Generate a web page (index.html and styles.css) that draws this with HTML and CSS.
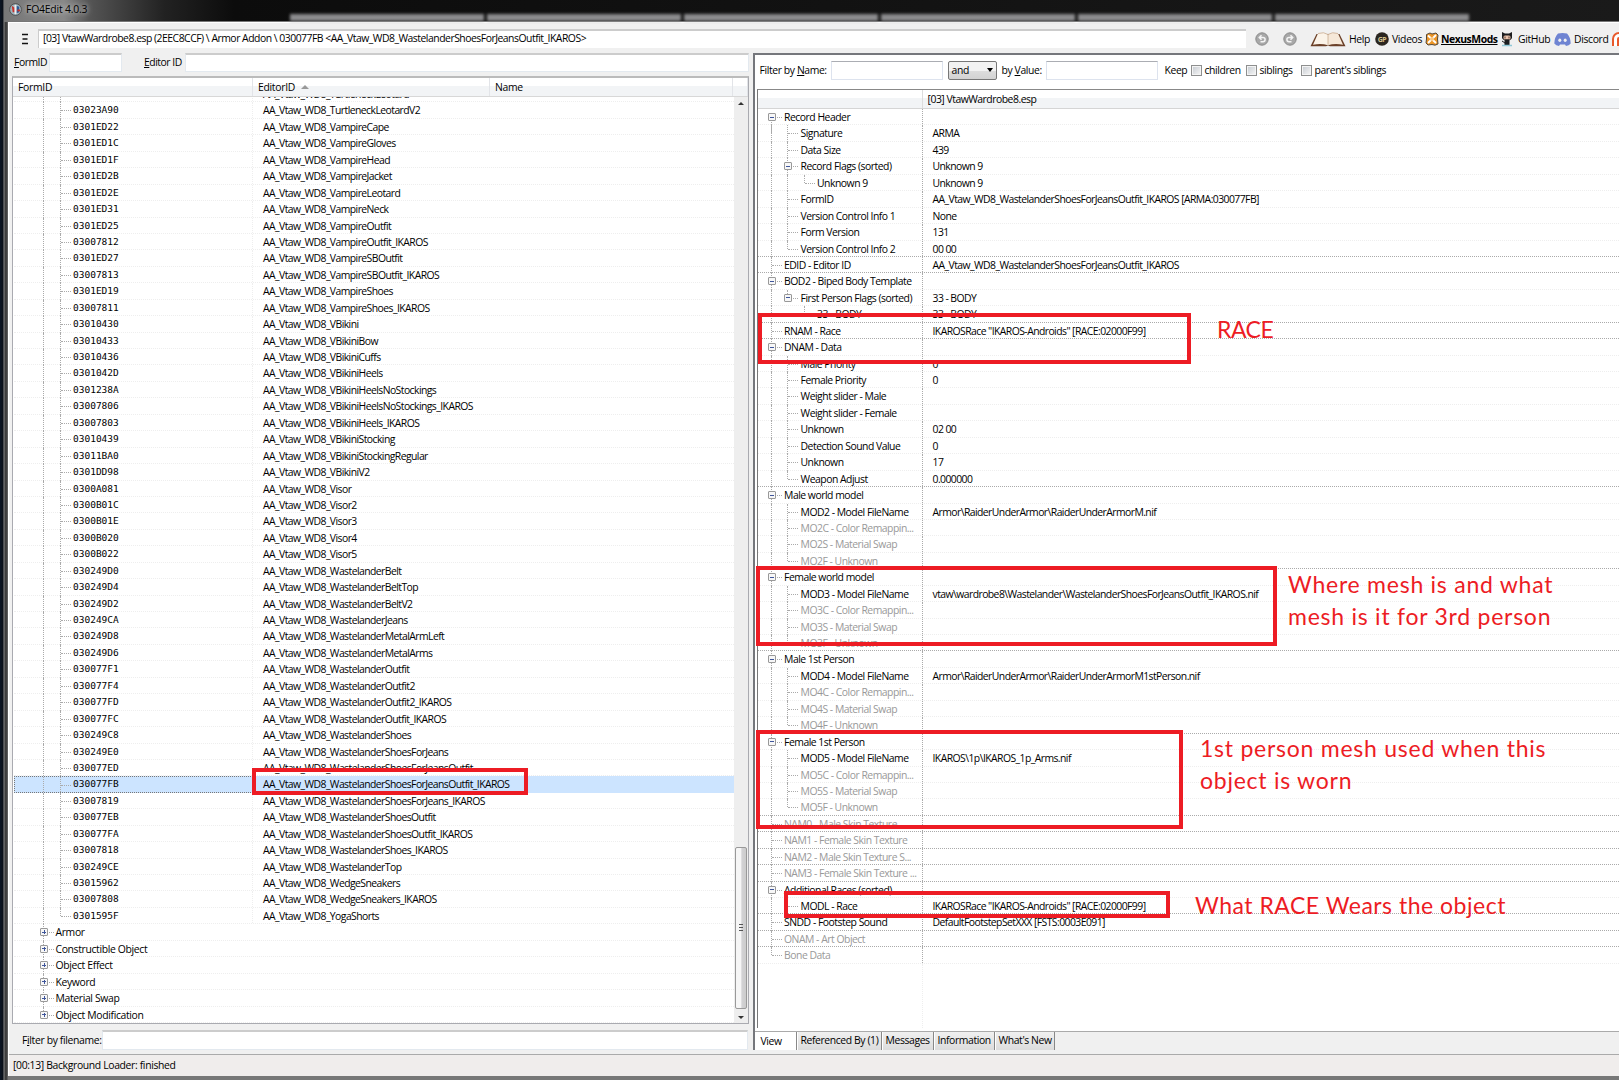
FILE: index.html
```
<!DOCTYPE html>
<html lang="en">
<head>
    <meta charset="UTF-8">
    <title>FO4Edit 4.0.3</title>
    <link rel="stylesheet" href="styles.css">
</head>
<body>
    <div class="titlebar">
        <svg class="app-icon" viewBox="0 0 14 14">
            <circle cx="7" cy="7" r="6.3" fill="#9fb4bd" stroke="#4b4b4b"/>
            <path d="M3 3l3 2v5H4z" fill="#c8322c"/>
            <path d="M8 3l3 1v6l-3 1z" fill="#2c5a96"/>
            <path d="M6 2h2v10H6z" fill="#eee"/>
            <path d="M9 7h3v2H9z" fill="#c8322c"/>
        </svg>
        <span class="app-title">FO4Edit 4.0.3</span>
        <div class="glass"><i></i><i></i><i></i><i></i><i></i><i></i></div>
    </div>

    <div class="window">
        <div class="toolbar">
            <svg class="menu-icon" viewBox="0 0 8 12"><path d="M1 1.5h6M1.5 6h5M1 10.5h6" stroke="#111" stroke-width="1.6"/></svg>
            <div class="path">[03] VtawWardrobe8.esp (2EEC8CCF) \ Armor Addon \ 030077FB &lt;AA_Vtaw_WD8_WastelanderShoesForJeansOutfit_IKAROS&gt;</div>
            <div class="links">
                <svg class="nav-icon" viewBox="0 0 14 14"><circle cx="7" cy="7" r="6.2" fill="#a8a8a8" stroke="#8b8b8b"/><path d="M4.500 5.500h3.500a2 2 0 0 1 0 4.200H5.500M6.500 3.300L4.300 5.500L6.500 7.700" fill="none" stroke="#f4f4f4" stroke-width="1.500"/></svg>
                <svg class="nav-icon next" viewBox="0 0 14 14"><circle cx="7" cy="7" r="6.2" fill="#a8a8a8" stroke="#8b8b8b"/><path d="M9.500 5.500H6a2 2 0 0 0 0 4.200h2.500M7.500 3.300L9.700 5.500L7.500 7.700" fill="none" stroke="#f4f4f4" stroke-width="1.500"/></svg>
                <svg class="book" viewBox="0 0 36 15">
                    <path d="M.5 14.300L6.500 2h23l6 12.300H20l-2-.8-2 .8z" fill="#6b4028"/>
                    <path d="M3 12.800L8 1.500Q14 -.5 18 2.500V13.300Q11 10.800 3 12.800z" fill="#fbf3e8"/>
                    <path d="M33 12.800L28 1.500Q22 -.5 18 2.500V13.300Q25 10.800 33 12.800z" fill="#f6e8d8"/>
                    <path d="M8 1.500Q14 -.5 18 2.500Q22 -.5 28 1.500" fill="none" stroke="#c9ab8f" stroke-width=".8"/>
                    <path d="M18 2.500V13" stroke="#c9ab8f" stroke-width=".8"/>
                </svg>
                <span class="w-help">Help</span>
                <svg class="ico" viewBox="0 0 14 14"><circle cx="7" cy="7" r="6.8" fill="#2b2620"/><text x="7" y="9.8" text-anchor="middle" class="gp">GP</text></svg>
                <span class="w-videos">Videos</span>
                <svg class="ico" viewBox="0 0 14 14"><path d="M1.500 2.500L5 1l2 1 4-1 2 2-.5 4 .5 5-3 1.200-3-.7-4 .5L1 11l.5-4z" fill="#ec9526" stroke="#54483a"/><path d="M3 3.500l8 7.500M11 3l-8 8" stroke="#fff" stroke-width="1.800"/><circle cx="7" cy="7" r="2" fill="#f6c684"/></svg>
                <span class="w-nexus">NexusMods</span>
                <svg class="ico cat" viewBox="0 0 14 15"><path d="M2 0l3 1.500h4L12 0v6Q11 8.500 7 8.500T2 6z" fill="#1d1d1f"/><rect x="3.500" y="3.500" width="7" height="4" rx="1.500" fill="#e9c3ac"/><path d="M5 4.500v2M9 4.500v2" stroke="#59362d"/><path d="M5 8h4v5H5zM2 9l3 2" fill="#1d1d1f" stroke="#1d1d1f"/><path d="M2 13.500h10" stroke="#8fc8d8" stroke-width="1.500"/></svg>
                <span class="w-github">GitHub</span>
                <svg class="discord" viewBox="0 0 17 13"><path d="M4 .5Q8.500 -.5 13 .5Q16.500 4 16.700 10.500Q15 12.500 12 13L11 11.500H6L5 13Q2 12.500.3 10.500Q.5 4 4 .5z" fill="#6f84d2"/><ellipse cx="5.800" cy="7.300" rx="1.500" ry="1.700" fill="#f0f0f0"/><ellipse cx="11.200" cy="7.300" rx="1.500" ry="1.700" fill="#f0f0f0"/></svg>
                <span class="w-discord">Discord</span>
                <svg class="patreon" viewBox="0 0 14 14"><path d="M1 14V7a6 6 0 0 1 12 0v7" fill="#fff" stroke="#e8592b" stroke-width="2"/><path d="M5 14V7a2 2 0 0 1 4 0v7" fill="#e8592b"/></svg>
            </div>
        </div>

        <div class="main">
            <div class="left">
                <div class="search">
                    <label><u>F</u>ormID</label>
                    <div class="input form-id"></div>
                    <label class="editor-label"><u>E</u>ditor ID</label>
                    <div class="input editor-id"></div>
                </div>
                <div class="tree">
                    <div class="tree-head">
                        <span>FormID</span><span>EditorID <i class="sort"></i></span><span>Name</span><span></span>
                    </div>
                    <div class="tree-body">
                        <div class="tree-rows" id="treeRows"></div>
                        <div class="scrollbar">
                            <i class="arrow up"></i>
                            <div class="thumb"><b></b><b></b><b></b></div>
                            <i class="arrow down"></i>
                        </div>
                    </div>
                </div>
                <div class="file-filter">
                    <label>F<u>i</u>lter by filename:</label>
                    <div class="input"></div>
                </div>
            </div>

            <div class="right">
                <div class="view">
                    <div class="filters">
                        <label class="f-name">Filter by <u>N</u>ame:</label>
                        <div class="box"></div>
                        <div class="select">and<i></i></div>
                        <label class="f-value">by <u>V</u>alue:</label>
                        <div class="box"></div>
                        <label class="f-keep">Keep</label>
                        <i class="check"></i><label class="f-children">children</label>
                        <i class="check"></i><label class="f-siblings">siblings</label>
                        <i class="check"></i><label>parent's siblings</label>
                    </div>
                    <div class="record">
                        <div class="record-head"><span></span><span>[03] VtawWardrobe8.esp</span></div>
                        <div id="recordRows"></div>
                        <div class="record-rest"></div>
                    </div>
                </div>
                <div class="tabs">
                    <div class="tab active">View</div>
                    <div class="tab t-ref">Referenced By (1)</div>
                    <div class="tab t-msg">Messages</div>
                    <div class="tab t-info">Information</div>
                    <div class="tab t-new">What's New</div>
                </div>
            </div>
        </div>

        <div class="status">[00:13] Background Loader: finished</div>
    </div>

    <!-- red notes drawn over the window -->
    <div class="mark mark-selected"></div>
    <div class="mark mark-race"></div>
    <div class="mark mark-third"></div>
    <div class="mark mark-first"></div>
    <div class="mark mark-modl"></div>
    <div class="note note-race">RACE</div>
    <div class="note note-third">Where mesh is and what<br>mesh is it for 3rd person</div>
    <div class="note note-first">1st person mesh used when this<br>object is worn</div>
    <div class="note note-modl">What RACE Wears the object</div>

    <script src="script.js"></script>
</body>
</html>
```
FILE: styles.css
```
* {
    box-sizing: border-box;
}

body {
    margin: 0;
    width: 1619px;
    height: 1080px;
    overflow: hidden;
    position: relative;
    display: flex;
    flex-direction: column;
    background: linear-gradient(90deg, #0b1524 0, #0b1018 3px, #8a8a8a 4px, #3a3a3a 5px, #444 7px, #777 8px);
    font-family: "Open Sans", sans-serif;
    font-size: 10.4px;
    letter-spacing: -0.49px;
    color: #000;
    white-space: nowrap;
}

i, b {
    display: block;
}

u {
    text-underline-offset: 1px;
}

/* title bar */
.titlebar {
    height: 22px;
    flex: none;
    margin-left: 4px;
    padding-left: 5px;
    display: flex;
    align-items: center;
    background: linear-gradient(90deg, #777 0, #888 60px, #555 85px, #222 160px, #0c0c0c 230px, #1a1a1a 100%);
    border-bottom: 1px solid #777;
}

.app-icon {
    width: 13px;
    height: 13px;
    margin-top: -2px;
}

.app-title {
    width: 240px;
    flex: none;
    padding-left: 4px;
    margin-top: -3px;
    letter-spacing: -0.2px;
    color: #000;
    text-shadow: 0 0 6px #ccc, 0 0 4px #bbb;
}

.glass {
    display: flex;
    flex: none;
    align-self: flex-end;
    gap: 3px;
    margin-left: 28px;
    filter: blur(1.5px);
}

.glass i {
    width: 194px;
    height: 7px;
    background: #8c8c8e;
}

/* window */
.window {
    flex: none;
    height: 1054px;
    margin-left: 8px;
    display: flex;
    flex-direction: column;
    background: #f0f0f0;
    border-top: 1px solid #fff;
    border-left: 1px solid #fff;
}

.toolbar {
    display: flex;
    height: 30px;
    flex: none;
    padding-top: 6px;
}

.menu-icon {
    width: 8px;
    height: 12px;
    flex: none;
    margin: 4px 0 0 12px;
}

.path {
    width: 1208px;
    flex: none;
    height: 19px;
    margin-left: 9px;
    padding-left: 4px;
    line-height: 14px;
    background: #fff;
    border-top: 2px solid #ccc;
    border-left: 1px solid #ccc;
}

.links {
    display: flex;
    flex: none;
    align-items: center;
    height: 20px;
    margin-left: 9px;
}

.links svg {
    flex: none;
}

.links span {
    flex: none;
    padding-left: 3px;
    letter-spacing: -0.35px;
}

.nav-icon {
    width: 14px;
    height: 14px;
}

.next {
    margin-left: 14px;
}

.book {
    width: 36px;
    height: 15px;
    margin-left: 13px;
}

.ico {
    width: 14px;
    height: 14px;
}

.cat {
    height: 15px;
}

.gp {
    font-size: 7px;
    font-weight: 700;
    fill: #d7c28c;
}

.discord {
    width: 17px;
    height: 13px;
}

.patreon {
    width: 14px;
    height: 14px;
}

.w-help {
    width: 29px;
}

.w-videos {
    width: 36px;
}

.links .w-nexus {
    width: 61px;
    padding-left: 2px;
    font-weight: 700;
    letter-spacing: -0.45px;
    text-decoration: underline;
}

.w-github {
    width: 39px;
    margin-left: 1px;
}

.w-discord {
    width: 41px;
}

.main {
    display: flex;
    height: 1001px;
    flex: none;
}

/* left pane */
.left {
    width: 744px;
    padding-left: 3px;
    display: flex;
    flex-direction: column;
}

.search {
    display: flex;
    height: 23px;
    padding-left: 2px;
    line-height: 18px;
}

.search label {
    width: 35px;
}

.search .editor-label {
    width: 41px;
    margin-left: 22px;
}

.input {
    height: 19px;
    background: #fff;
    border: 1px solid #e3e9ef;
    border-top: 2px solid #ccc;
}

.form-id {
    width: 73px;
}

.editor-id {
    width: 564px;
}

.tree {
    width: 737px;
    height: 948px;
    background: #fff;
    border: 1px solid #a9aab0;
    border-top: 2px solid #bbb;
}

.tree-head {
    height: 19px;
    display: grid;
    grid-template-columns: 240px 237px 243px 1fr;
    line-height: 18px;
    letter-spacing: -0.3px;
    background: linear-gradient(#fff 45%, #f2f4f6 46%);
    border-bottom: 1px solid #d8d8d8;
}

.tree-head span {
    display: flex;
    padding-left: 5px;
    border-right: 1px solid #e2e4e8;
}

.sort {
    margin: 7px 0 0 6px;
    width: 0;
    height: 0;
    border: 4px solid transparent;
    border-top: 0;
    border-bottom-color: #999;
}

.tree-body {
    display: flex;
    height: 926px;
    overflow: hidden;
}

.tree-rows {
    width: 721px;
    flex: none;
    margin-top: -11px;
    padding-left: 1px;
}

.row {
    display: flex;
    height: 16.45px;
    line-height: 16px;
    border-bottom: 1px dotted #eee;
}

.cell-id {
    width: 239px;
    flex: none;
    display: flex;
    padding-left: 29px;
    border-right: 1px dotted #eee;
}

.row.group .cell-id {
    border-right: 0;
    letter-spacing: -0.35px;
}

.cell-name {
    padding-left: 10px;
    letter-spacing: -0.56px;
}

.mono {
    font-family: "DejaVu Sans Mono", monospace;
    font-size: 9.5px;
    letter-spacing: 0;
}

.row.selected {
    background: #cce4ff;
    border-bottom: 0;
}

.row.selected .cell-id {
    border: 1px dotted #777;
    padding-left: 28px;
    line-height: 14px;
}

/* tree guides */
.guide {
    width: 16.5px;
    height: 16.45px;
    flex: none;
    position: relative;
}

.guide:last-of-type {
    margin-right: -3px;
}

.group .guide:last-of-type {
    margin-right: -4px;
}

.guide.line::before,
.guide.tee::before,
.guide.end::before,
.guide.node::before {
    content: "";
    position: absolute;
    left: 0;
    top: 0;
    height: 100%;
    border-left: 1px dotted #aaa;
}

.guide.end::before,
.guide.node.last::before {
    height: 8px;
}

.guide.node.first::before {
    top: 8px;
}

.guide.tee::after,
.guide.end::after,
.guide.node::after {
    content: "";
    position: absolute;
    left: 1px;
    top: 8px;
    width: 10px;
    border-top: 1px dotted #aaa;
}

.toggle {
    position: absolute;
    z-index: 1;
    left: -3px;
    top: 4px;
    width: 8px;
    height: 8px;
    background: #f7f7f7;
    border: 1px solid #999;
    border-radius: 1px;
}

.toggle::before,
.plus::after {
    content: "";
    position: absolute;
    left: 1px;
    top: 2.5px;
    width: 4px;
    height: 1px;
    background: #3f569b;
}

.plus::after {
    left: 2.5px;
    top: 1px;
    width: 1px;
    height: 4px;
}

/* scrollbar */
.scrollbar {
    width: 14px;
    display: flex;
    flex-direction: column;
    align-items: center;
    background: #eee;
}

.arrow {
    width: 0;
    height: 0;
    border: 3px solid transparent;
}

.up {
    margin-top: 5px;
    border-top: 0;
    border-bottom-color: #333;
}

.down {
    margin-top: 7px;
    border-bottom: 0;
    border-top-color: #333;
}

.thumb {
    width: 12px;
    height: 162px;
    margin-top: 742px;
    padding: 76px 3px 0;
    background: linear-gradient(90deg, #f6f6f6 45%, #d2d2d4 60%, #ccc);
    border: 1px solid #999;
    border-radius: 2px;
}

.thumb b {
    height: 1px;
    margin-bottom: 2px;
    background: #555;
}

.file-filter {
    display: flex;
    margin-top: 6px;
    padding-left: 10px;
    line-height: 20px;
    letter-spacing: -0.35px;
}

.file-filter label {
    width: 80px;
}

.file-filter .input {
    width: 646px;
    height: 20px;
}

/* right pane */
.right {
    width: 867px;
    display: flex;
    flex-direction: column;
    border-left: 2px solid #75777c;
    border-top: 2px solid #75777c;
    height: 997px;
}

.view {
    height: 976px;
    flex: none;
    padding-left: 2px;
    background: #fff;
}

.filters {
    display: flex;
    align-items: center;
    height: 30px;
    padding-left: 3px;
    letter-spacing: -0.4px;
}

.f-name {
    width: 71px;
}

.box {
    width: 112px;
    height: 19px;
    border: 1px solid #dde3ee;
    border-top-color: #abadb3;
}

.select {
    width: 49px;
    height: 19px;
    margin: 0 5px;
    padding: 0 3px;
    display: flex;
    justify-content: space-between;
    align-items: center;
    background: linear-gradient(#f2f2f2 50%, #ddd 51%, #d2d2d2);
    border: 1px solid #777;
    border-radius: 2px;
}

.select i {
    border: 3px solid transparent;
    border-top: 4px solid #000;
    border-bottom: 0;
}

.f-value {
    width: 44px;
}

.f-keep {
    width: 26px;
    margin-left: 7px;
}

.check {
    width: 11px;
    height: 11px;
    margin-right: 3px;
    background: linear-gradient(135deg, #c5cad0, #f7f7f7);
    border: 1px solid #8e8f8f;
    box-shadow: inset 0 0 0 1px #f4f4f4;
}

.f-children {
    width: 41px;
}

.f-siblings {
    width: 41px;
}

.record {
    height: 939px;
    margin-top: 4px;
    display: flex;
    flex-direction: column;
    border-left: 1px solid #777;
    border-top: 1px solid #888;
}

.record-head {
    display: grid;
    grid-template-columns: 164px 1fr;
    flex: none;
    height: 19px;
    line-height: 18px;
    background: linear-gradient(#fff 45%, #f2f4f6 46%);
    border-bottom: 1px solid #d5d5d5;
}

.record-head span + span {
    padding-left: 5px;
    border-left: 1px solid #ddd;
}

.record .row .cell-id {
    width: 165px;
    padding-left: 13px;
    border-right: 1px dotted #aaa;
}

.record .row .cell-name {
    padding-left: 10px;
}

.record .row.strong {
    border-bottom-color: #aaa;
}

.muted {
    color: #999;
}

.record-rest {
    width: 165px;
    flex: 1;
    border-right: 1px dotted #eee;
}

/* tabs */
.tabs {
    display: flex;
    height: 19px;
    background: #f0f0f0;
    border-top: 1px solid #aaa;
    line-height: 16px;
    letter-spacing: -0.4px;
}

.tab {
    padding-left: 3px;
    border-right: 1px solid #888;
    border-left: 1px solid #fff;
    background: linear-gradient(#f0f0f0, #dcdcdc);
}

.tab.active {
    width: 42px;
    padding-left: 5px;
    line-height: 19px;
    background: #fff;
}

.t-ref {
    width: 85px;
}

.t-msg {
    width: 52px;
}

.t-info {
    width: 61px;
}

.t-new {
    width: 60px;
}

.status {
    height: 22px;
    padding-left: 4px;
    line-height: 20px;
    letter-spacing: -0.35px;
    background: #f0edec;
    border-top: 1px solid #aaa;
}

/* notes */
.mark {
    position: absolute;
    border: 4px solid #ed1c24;
}

.mark-selected {
    left: 252px;
    top: 768px;
    width: 276px;
    height: 27px;
}

.mark-race {
    left: 758px;
    top: 313px;
    width: 433px;
    height: 51px;
}

.mark-third {
    left: 756px;
    top: 566px;
    width: 521px;
    height: 80px;
}

.mark-first {
    left: 756px;
    top: 730px;
    width: 427px;
    height: 99px;
}

.mark-modl {
    left: 784px;
    top: 891px;
    width: 386px;
    height: 27px;
}

.note {
    position: absolute;
    color: #ed1c24;
    font-family: Lato, sans-serif;
    font-size: 23px;
    line-height: 32px;
    letter-spacing: 0.75px;
}

.note-race {
    left: 1217px;
    top: 313px;
    letter-spacing: -0.5px;
}

.note-third {
    left: 1288px;
    top: 568px;
}

.note-first {
    left: 1200px;
    top: 732px;
}

.note-modl {
    left: 1195px;
    top: 889px;
    letter-spacing: 0.5px;
}
```
FILE: script.js
```
const forms = `
 |TurtleneckLeotard
03023A90|TurtleneckLeotardV2
0301ED22|VampireCape
0301ED1C|VampireGloves
0301ED1F|VampireHead
0301ED2B|VampireJacket
0301ED2E|VampireLeotard
0301ED31|VampireNeck
0301ED25|VampireOutfit
03007812|VampireOutfit_IKAROS
0301ED27|VampireSBOutfit
03007813|VampireSBOutfit_IKAROS
0301ED19|VampireShoes
03007811|VampireShoes_IKAROS
03010430|VBikini
03010433|VBikiniBow
03010436|VBikiniCuffs
0301042D|VBikiniHeels
0301238A|VBikiniHeelsNoStockings
03007806|VBikiniHeelsNoStockings_IKAROS
03007803|VBikiniHeels_IKAROS
03010439|VBikiniStocking
03011BA0|VBikiniStockingRegular
0301DD98|VBikiniV2
0300A081|Visor
0300B01C|Visor2
0300B01E|Visor3
0300B020|Visor4
0300B022|Visor5
030249D0|WastelanderBelt
030249D4|WastelanderBeltTop
030249D2|WastelanderBeltV2
030249CA|WastelanderJeans
030249D8|WastelanderMetalArmLeft
030249D6|WastelanderMetalArms
030077F1|WastelanderOutfit
030077F4|WastelanderOutfit2
030077FD|WastelanderOutfit2_IKAROS
030077FC|WastelanderOutfit_IKAROS
030249C8|WastelanderShoes
030249E0|WastelanderShoesForJeans
030077ED|WastelanderShoesForJeansOutfit
030077FB|WastelanderShoesForJeansOutfit_IKAROS
03007819|WastelanderShoesForJeans_IKAROS
030077EB|WastelanderShoesOutfit
030077FA|WastelanderShoesOutfit_IKAROS
03007818|WastelanderShoes_IKAROS
030249CE|WastelanderTop
03015962|WedgeSneakers
03007808|WedgeSneakers_IKAROS
0301595F|YogaShorts`.trim().split('\n').map(line => line.split('|'));

const groups = ['Armor', 'Constructible Object', 'Object Effect', 'Keyword', 'Material Swap', 'Object Modification'];

let html = '';
forms.forEach(([id, name], i) => {
    const end = i === forms.length - 1 ? 'end' : 'tee';
    html += `<div class="row ${id === '030077FB' ? 'selected' : ''}">
        <div class="cell-id"><div class="guide line"></div><div class="guide ${end}"></div><span class="mono">${i ? id : ''}</span></div>
        <div class="cell-name">AA_Vtaw_WD8_${name}</div>
    </div>`;
});
groups.forEach((name, i) => {
    const last = i === groups.length - 1 ? 'last' : '';
    html += `<div class="row group"><div class="cell-id"><div class="guide node ${last}"><i class="toggle plus"></i></div>${name}</div></div>`;
});
document.getElementById('treeRows').innerHTML = html;

// guides: | line, + tee, L end, - open node, _ last open node, space empty
// flags: f = first row, m = muted, s = strong separator below
const record = [
    ['-', 'Record Header', '', 'f'],
    ['|+', 'Signature', 'ARMA'],
    ['|+', 'Data Size', '439'],
    ['|-', 'Record Flags (sorted)', 'Unknown 9'],
    ['||L', 'Unknown 9', 'Unknown 9'],
    ['|+', 'FormID', 'AA_Vtaw_WD8_WastelanderShoesForJeansOutfit_IKAROS [ARMA:030077FB]'],
    ['|+', 'Version Control Info 1', 'None'],
    ['|+', 'Form Version', '131'],
    ['|L', 'Version Control Info 2', '00 00', 's'],
    ['+', 'EDID - Editor ID', 'AA_Vtaw_WD8_WastelanderShoesForJeansOutfit_IKAROS', 's'],
    ['-', 'BOD2 - Biped Body Template', ''],
    ['|_', 'First Person Flags (sorted)', '33 - BODY'],
    ['| L', '33 - BODY', '33 - BODY', 's'],
    ['+', 'RNAM - Race', 'IKAROSRace "IKAROS-Androids" [RACE:02000F99]', 's'],
    ['-', 'DNAM - Data', ''],
    ['|+', 'Male Priority', '0'],
    ['|+', 'Female Priority', '0'],
    ['|+', 'Weight slider - Male', ''],
    ['|+', 'Weight slider - Female', ''],
    ['|+', 'Unknown', '02 00'],
    ['|+', 'Detection Sound Value', '0'],
    ['|+', 'Unknown', '17'],
    ['|L', 'Weapon Adjust', '0.000000', 's'],
    ['-', 'Male world model', ''],
    ['|+', 'MOD2 - Model FileName', 'Armor\\RaiderUnderArmor\\RaiderUnderArmorM.nif'],
    ['|+', 'MO2C - Color Remappin...', '', 'm'],
    ['|+', 'MO2S - Material Swap', '', 'm'],
    ['|L', 'MO2F - Unknown', '', 'ms'],
    ['-', 'Female world model', ''],
    ['|+', 'MOD3 - Model FileName', 'vtaw\\wardrobe8\\Wastelander\\WastelanderShoesForJeansOutfit_IKAROS.nif'],
    ['|+', 'MO3C - Color Remappin...', '', 'm'],
    ['|+', 'MO3S - Material Swap', '', 'm'],
    ['|L', 'MO3F - Unknown', '', 'ms'],
    ['-', 'Male 1st Person', ''],
    ['|+', 'MOD4 - Model FileName', 'Armor\\RaiderUnderArmor\\RaiderUnderArmorM1stPerson.nif'],
    ['|+', 'MO4C - Color Remappin...', '', 'm'],
    ['|+', 'MO4S - Material Swap', '', 'm'],
    ['|L', 'MO4F - Unknown', '', 'ms'],
    ['-', 'Female 1st Person', ''],
    ['|+', 'MOD5 - Model FileName', 'IKAROS\\1p\\IKAROS_1p_Arms.nif'],
    ['|+', 'MO5C - Color Remappin...', '', 'm'],
    ['|+', 'MO5S - Material Swap', '', 'm'],
    ['|L', 'MO5F - Unknown', '', 'ms'],
    ['+', 'NAM0 - Male Skin Texture', '', 'ms'],
    ['+', 'NAM1 - Female Skin Texture', '', 'ms'],
    ['+', 'NAM2 - Male Skin Texture S...', '', 'ms'],
    ['+', 'NAM3 - Female Skin Texture ...', '', 'ms'],
    ['-', 'Additional Races (sorted)', ''],
    ['|L', 'MODL - Race', 'IKAROSRace "IKAROS-Androids" [RACE:02000F99]', 's'],
    ['+', 'SNDD - Footstep Sound', 'DefaultFootstepSetXXX [FSTS:0003E091]', 's'],
    ['+', 'ONAM - Art Object', '', 'ms'],
    ['L', 'Bone Data', '', 'm']
];

const guideClass = { '|': 'line', '+': 'tee', 'L': 'end', '-': 'node', '_': 'node last', ' ': '' };

document.getElementById('recordRows').innerHTML = record.map(([tree, name, value, flags = '']) => {
    const guides = [...tree].map(c => {
        const toggle = c === '-' || c === '_' ? '<i class="toggle"></i>' : '';
        return `<div class="guide ${guideClass[c]} ${flags.includes('f') ? 'first' : ''}">${toggle}</div>`;
    }).join('');
    return `<div class="row ${flags.includes('s') ? 'strong' : ''} ${flags.includes('m') ? 'muted' : ''}">
        <div class="cell-id">${guides}${name}</div><div class="cell-name">${value}</div>
    </div>`;
}).join('');
```
